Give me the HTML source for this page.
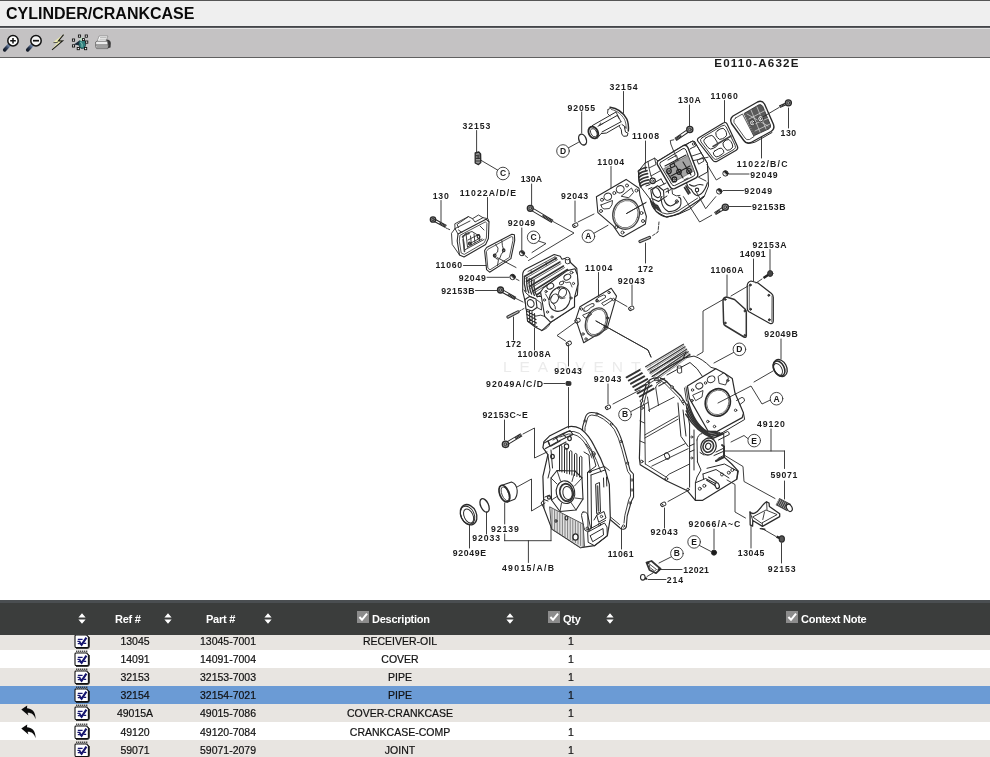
<!DOCTYPE html>
<html><head><meta charset="utf-8"><title>CYLINDER/CRANKCASE</title>
<style>
html,body{margin:0;padding:0;background:#fff;}
body{width:990px;height:757px;overflow:hidden;position:relative;font-family:"Liberation Sans",Arial,sans-serif;color:#111;}
#title{position:absolute;left:0;top:0;width:990px;height:26px;background:#efefef;border-top:1px solid #555;box-sizing:border-box;}
#title span{position:absolute;left:6px;top:4px;font-size:16px;font-weight:bold;color:#0a0a0a;letter-spacing:0px;white-space:nowrap;}
#tline{position:absolute;left:0;top:26px;width:990px;height:2px;background:linear-gradient(#3e4044 0,#4e5054 70%,#9a9a9c 100%);}
#tool{position:absolute;left:0;top:28px;width:990px;height:29px;background:#c4c2c3;border-top:1px solid #e4e4e4;box-sizing:border-box;}
#tline2{position:absolute;left:0;top:57px;width:990px;height:1px;background:#606060;}
#diag{position:absolute;left:0;top:57px;width:990px;height:543px;}
#thead{position:absolute;left:0;top:600px;width:990px;height:34.5px;background:#3b3d3c;border-top:3px solid #4a4e51;box-sizing:border-box;color:#fff;font-weight:bold;font-size:11px;}
#thead span{position:absolute;top:10px;white-space:nowrap;letter-spacing:-0.25px;}
#thead svg{position:absolute;}
.row{position:absolute;left:0;width:990px;height:18.3px;font-size:10.5px;color:#111;}
.row span{-webkit-text-stroke:0.2px #111;position:absolute;top:3.5px;text-align:center;white-space:nowrap;transform:translateX(-50%);}
.ni{position:absolute;left:74px;top:0.5px;}
.bk{position:absolute;left:21px;top:1.5px;}
#diag{fill:none;stroke:#2a2a2a;stroke-width:0.9;stroke-linecap:round;stroke-linejoin:round;}
#diag text{stroke:none;fill:#1c1c1c;font-family:"Liberation Sans",sans-serif;font-weight:bold;}
#diag text.cl{font-family:"Liberation Sans",sans-serif;font-size:8.5px;text-anchor:middle;}
#title,#thead,#rows,#diag,#tool{will-change:transform;}
.odd{background:#e8e5e1;}
.sel{background:#6b9bd5;}
</style></head><body>
<svg width="0" height="0" style="position:absolute"><defs>
<symbol id="note" viewBox="0 0 16 17">
<path d="M1.9 3 H12.6 L14.4 4.8 V14.2 Q14.4 15.6 13 15.6 H2.4 Q1 15.6 1 14.2 V3.9 Q1 3 1.9 3 Z" fill="#fff" stroke="#111" stroke-width="1.1"/>
<path d="M2 16.2 H13.4 Q15.2 16.2 15.2 14.4 V5" fill="none" stroke="#111" stroke-width="1.1"/>
<path d="M2.2 1.7 H13.4" stroke="#222" stroke-width="2.2" stroke-dasharray="1.1 0.9"/>
<path d="M2.2 2.6 H13.4" stroke="#fff" stroke-width="0.7" stroke-dasharray="0.5 1.5" stroke-dashoffset="-0.3"/>
<path d="M5.4 10.2 L7.6 12.8 L12.4 5.6" fill="none" stroke="#15156e" stroke-width="2.1"/>
<path d="M3.8 7.4 H8.6 M3.4 9.4 H6.4 M3.8 11.6 H5.6 M9.6 11.4 H12.2" stroke="#15156e" stroke-width="1.1"/>
</symbol>
<symbol id="back" viewBox="0 0 16 15">
<path d="M0.3 4.6 L6.2 0.4 L6 3.2 C10.5 3.4 14.8 6.2 14.6 14.2 C13.2 9.6 10.2 7.6 6.6 7.8 L7.4 10.4 Z" fill="#0c0c0c"/>
</symbol>
<symbol id="sort" viewBox="0 0 8 11">
<path d="M4 0.3 L7.6 4.6 H0.4 Z M4 10.7 L7.6 6.4 H0.4 Z" fill="#fff"/>
</symbol>
<symbol id="chk" viewBox="0 0 12 12">
<rect width="12" height="12" fill="#8c8c8c"/>
<path d="M2.4 6 L5 8.8 L10 2.6" fill="none" stroke="#fff" stroke-width="2"/>
</symbol>
</defs></svg>
<div id="title"><span>CYLINDER/CRANKCASE</span></div>
<div id="tline"></div>
<div id="tool"><svg width="120" height="29" viewBox="0 28 120 29" style="position:absolute;left:0;top:-1px">
<defs><linearGradient id="hg" x1="1" y1="0" x2="0" y2="1"><stop offset="0" stop-color="#7f95b8"/><stop offset="0.6" stop-color="#2a3850"/><stop offset="1" stop-color="#141c2a"/></linearGradient></defs>
<g>
<path d="M9.2 45 L4.6 50" stroke="url(#hg)" stroke-width="3.4" stroke-linecap="round"/>
<circle cx="13" cy="40.7" r="5.2" fill="#fff" stroke="#111" stroke-width="1.5"/>
<path d="M10.2 40.7 H15.8 M13 37.9 V43.5" stroke="#111" stroke-width="1.5"/>
<path d="M32.2 45 L27.6 50" stroke="url(#hg)" stroke-width="3.4" stroke-linecap="round"/>
<circle cx="36" cy="40.7" r="5.2" fill="#f4f4f4" stroke="#111" stroke-width="1.5"/>
<path d="M33 40.7 H39" stroke="#111" stroke-width="1.7"/>
</g>
<g>
<path d="M63.6 34.6 L53.4 42.6 L57.8 42.4 L52 49.8 L62.6 40.8 L58.4 41 Z" fill="#f1f0b0" stroke="#f1f0b0" stroke-width="0.6"/>
<path d="M63.6 34.6 L58.4 41 L62.6 40.8 L52 49.8" fill="none" stroke="#1a1a1a" stroke-width="1.1"/>
<path d="M53.4 42.6 L57.8 42.4" stroke="#333" stroke-width="0.8"/>
</g>
<g>
<path d="M73.8 44.5 L79.5 40.5 L80 45.5 Z" fill="#1c2a3a"/>
<ellipse cx="82.3" cy="43.8" rx="3.4" ry="4.8" fill="#2f7d7c" stroke="#163c40" stroke-width="0.8"/>
<ellipse cx="82" cy="39.2" rx="2.2" ry="2" fill="#bfe0c8"/>
<path d="M80.5 42 Q83 43.5 82 47" stroke="#8fd0c0" stroke-width="0.9" fill="none"/>
<g fill="#fff" stroke="#111" stroke-width="0.9">
<rect x="78.4" y="35" width="2.2" height="2.2"/><rect x="85.2" y="35" width="2.2" height="2.2"/>
<rect x="72.4" y="39" width="2.2" height="2.2"/><rect x="72.4" y="44.8" width="2.2" height="2.2"/>
<rect x="77.2" y="47.5" width="2.2" height="2.2"/><rect x="84.5" y="47.5" width="2.2" height="2.2"/>
<rect x="85.6" y="41" width="2.2" height="2.2"/><rect x="82.4" y="38.6" width="2" height="2"/>
</g></g>
<g>
<path d="M99.2 36 H107.9 L105.8 41.6 H97 Z" fill="#fff" stroke="#777" stroke-width="0.6"/>
<path d="M100 37.6 H106.6 M99.4 39.2 H106 " stroke="#888" stroke-width="0.6"/>
<path d="M106.5 39.5 Q110.5 39.5 110.8 43 L110.5 47.5 L107 48.5 Z" fill="#3a3a3a"/>
<path d="M95.6 42 L97.2 41.2 H107.5 L108.2 45.5 L107.8 48.6 H96.6 L95.6 46.8 Z" fill="#ececec" stroke="#555" stroke-width="0.7"/>
<path d="M95.8 45 H108 M96.4 47 H107.6" stroke="#444" stroke-width="0.9"/>
</g>
</svg></div>
<div id="tline2"></div>
<svg id="diag" viewBox="0 57 990 543" width="990" height="543">
<!--DIAGRAM-->
<text x="503" y="372" font-size="15.5" textLength="194" lengthAdjust="spacing" style="fill:#ebebeb;font-weight:normal">LEADVENTURE</text>
<g class="lb">
<text x="609.40" y="89.8" font-size="8.7" textLength="28.25" lengthAdjust="spacing">32154</text>
<text x="567.60" y="110.5" font-size="8.7" textLength="27.50" lengthAdjust="spacing">92055</text>
<text x="462.60" y="128.7" font-size="8.7" textLength="27.63" lengthAdjust="spacing">32153</text>
<text x="520.70" y="182.3" font-size="8.7" textLength="21.33" lengthAdjust="spacing">130A</text>
<text x="459.70" y="195.8" font-size="8.7" textLength="56.33" lengthAdjust="spacing">11022A/D/E</text>
<text x="432.70" y="198.7" font-size="8.7" textLength="16.05" lengthAdjust="spacing">130</text>
<text x="631.90" y="139.0" font-size="8.7" textLength="27.12" lengthAdjust="spacing">11008</text>
<text x="678.10" y="103.4" font-size="8.7" textLength="22.67" lengthAdjust="spacing">130A</text>
<text x="710.60" y="98.7" font-size="8.7" textLength="27.25" lengthAdjust="spacing">11060</text>
<text x="780.60" y="135.5" font-size="8.7" textLength="15.45" lengthAdjust="spacing">130</text>
<text x="736.70" y="166.6" font-size="8.7" textLength="50.74" lengthAdjust="spacing">11022/B/C</text>
<text x="750.20" y="177.9" font-size="8.7" textLength="27.50" lengthAdjust="spacing">92049</text>
<text x="744.20" y="193.7" font-size="8.7" textLength="27.88" lengthAdjust="spacing">92049</text>
<text x="752.00" y="209.7" font-size="8.7" textLength="33.60" lengthAdjust="spacing">92153B</text>
<text x="597.20" y="164.8" font-size="8.7" textLength="27.00" lengthAdjust="spacing">11004</text>
<text x="561.10" y="199.4" font-size="8.7" textLength="27.00" lengthAdjust="spacing">92043</text>
<text x="507.70" y="226.0" font-size="8.7" textLength="27.50" lengthAdjust="spacing">92049</text>
<text x="435.50" y="268.4" font-size="8.7" textLength="26.62" lengthAdjust="spacing">11060</text>
<text x="458.70" y="280.5" font-size="8.7" textLength="27.12" lengthAdjust="spacing">92049</text>
<text x="441.20" y="293.7" font-size="8.7" textLength="33.24" lengthAdjust="spacing">92153B</text>
<text x="505.70" y="347.0" font-size="8.7" textLength="15.30" lengthAdjust="spacing">172</text>
<text x="517.60" y="356.9" font-size="8.7" textLength="33.12" lengthAdjust="spacing">11008A</text>
<text x="585.00" y="271.0" font-size="8.7" textLength="27.25" lengthAdjust="spacing">11004</text>
<text x="617.70" y="283.5" font-size="8.7" textLength="27.12" lengthAdjust="spacing">92043</text>
<text x="637.70" y="271.5" font-size="8.7" textLength="15.30" lengthAdjust="spacing">172</text>
<text x="752.50" y="247.7" font-size="8.7" textLength="33.96" lengthAdjust="spacing">92153A</text>
<text x="739.80" y="257.2" font-size="8.7" textLength="25.75" lengthAdjust="spacing">14091</text>
<text x="710.50" y="273.1" font-size="8.7" textLength="33.00" lengthAdjust="spacing">11060A</text>
<text x="764.30" y="336.9" font-size="8.7" textLength="33.48" lengthAdjust="spacing">92049B</text>
<text x="554.20" y="374.4" font-size="8.7" textLength="27.75" lengthAdjust="spacing">92043</text>
<text x="593.70" y="381.9" font-size="8.7" textLength="27.75" lengthAdjust="spacing">92043</text>
<text x="486.10" y="386.7" font-size="8.7" textLength="57.00" lengthAdjust="spacing">92049A/C/D</text>
<text x="482.40" y="417.8" font-size="8.7" textLength="45.37" lengthAdjust="spacing">92153C~E</text>
<text x="757.00" y="427.3" font-size="8.7" textLength="27.88" lengthAdjust="spacing">49120</text>
<text x="770.40" y="477.5" font-size="8.7" textLength="27.00" lengthAdjust="spacing">59071</text>
<text x="490.90" y="532.0" font-size="8.7" textLength="28.00" lengthAdjust="spacing">92139</text>
<text x="472.20" y="541.4" font-size="8.7" textLength="27.88" lengthAdjust="spacing">92033</text>
<text x="452.70" y="555.6" font-size="8.7" textLength="33.24" lengthAdjust="spacing">92049E</text>
<text x="501.90" y="571.0" font-size="8.7" textLength="52.20" lengthAdjust="spacing">49015/A/B</text>
<text x="607.70" y="556.9" font-size="8.7" textLength="25.88" lengthAdjust="spacing">11061</text>
<text x="650.40" y="535.4" font-size="8.7" textLength="27.37" lengthAdjust="spacing">92043</text>
<text x="688.50" y="526.8" font-size="8.7" textLength="51.75" lengthAdjust="spacing">92066/A~C</text>
<text x="737.70" y="556.2" font-size="8.7" textLength="26.63" lengthAdjust="spacing">13045</text>
<text x="767.70" y="571.8" font-size="8.7" textLength="28.00" lengthAdjust="spacing">92153</text>
<text x="683.20" y="572.8" font-size="8.7" textLength="25.75" lengthAdjust="spacing">12021</text>
<text x="666.70" y="582.7" font-size="8.7" textLength="16.50" lengthAdjust="spacing">214</text>
</g>
<text class="big" x="714.2" y="67" font-size="11.6" textLength="84.3" lengthAdjust="spacing">E0110-A632E</text>
<circle cx="563" cy="151" r="6.3" fill="#fff" stroke="#333" stroke-width="0.9"/>
<text class="cl" x="563" y="153.9">D</text>
<circle cx="503" cy="173.5" r="6.3" fill="#fff" stroke="#333" stroke-width="0.9"/>
<text class="cl" x="503" y="176.4">C</text>
<circle cx="533.6" cy="237.3" r="6.3" fill="#fff" stroke="#333" stroke-width="0.9"/>
<text class="cl" x="533.6" y="240.2">C</text>
<circle cx="588.4" cy="236.3" r="6.3" fill="#fff" stroke="#333" stroke-width="0.9"/>
<text class="cl" x="588.4" y="239.2">A</text>
<circle cx="739.4" cy="349.3" r="6.3" fill="#fff" stroke="#333" stroke-width="0.9"/>
<text class="cl" x="739.4" y="352.2">D</text>
<circle cx="776.5" cy="398.7" r="6.3" fill="#fff" stroke="#333" stroke-width="0.9"/>
<text class="cl" x="776.5" y="401.6">A</text>
<circle cx="625" cy="414.5" r="6.3" fill="#fff" stroke="#333" stroke-width="0.9"/>
<text class="cl" x="625" y="417.4">B</text>
<circle cx="754.2" cy="440.6" r="6.3" fill="#fff" stroke="#333" stroke-width="0.9"/>
<text class="cl" x="754.2" y="443.5">E</text>
<circle cx="694.1" cy="541.9" r="6.3" fill="#fff" stroke="#333" stroke-width="0.9"/>
<text class="cl" x="694.1" y="544.8">E</text>
<circle cx="676.9" cy="553.5" r="6.3" fill="#fff" stroke="#333" stroke-width="0.9"/>
<text class="cl" x="676.9" y="556.4">B</text>
<ellipse cx="582.6" cy="139.6" rx="3.6" ry="5.6" transform="rotate(-22 582.6 139.6)" stroke-width="1.4"/>
<g>
<ellipse cx="593.3" cy="132.5" rx="4.6" ry="6.1" transform="rotate(-25 593.3 132.5)" stroke-width="1.9" fill="#fff"/>
<ellipse cx="593.8" cy="132.7" rx="2.9" ry="4.4" transform="rotate(-25 593.8 132.7)" stroke-width="0.8"/>
<path d="M592.3 125.6 L616 112 M598 126.2 L617.3 115.4 M602 132 L621 121.8 M597 138.6 L601 133.6 L606.5 133 L620 125.2" stroke-width="1"/>
<path d="M600.5 123 L599.5 125.5 L603 123.5" stroke-width="0.8"/>
<path d="M610 107.2 Q621 108.5 626.8 119 Q629 124 628.3 131" stroke-width="1.5"/>
<path d="M611.5 109.5 Q620 111.5 624.5 119.5 Q626.5 124 626 129" stroke-width="0.8" stroke-dasharray="2 1"/>
<path d="M608 109.5 L607.5 113.5 L610 116 M608 109.5 L611 108 M616 112 L621 121.8 M617.3 115.4 L619 118.5" stroke-width="0.9"/>
<path d="M619.5 126.5 Q622 129 621.8 134 L623.5 136.3 L627.2 136 L628 133.2 L625.5 132 L624.5 127.5 M622 124.5 L626 127.5" stroke-width="1"/>
</g>
<path d="M475.2 153 L478.8 152 L480.6 154 L480.8 162.5 L478.5 164.6 L475.2 163 Z" stroke-width="1.3" fill="#999"/>
<path d="M476 155.5 L480 155 M476 158.5 L480.5 158.5 M476 161 L480.5 161" stroke-width="0.9"/>
<ellipse cx="478" cy="157" rx="1" ry="1.3" stroke-width="0.7"/>
<path d="M434.9 220.5 L446.0 226.5" stroke="#222" stroke-width="3.2" stroke-linecap="butt"/>
<path d="M434.9 220.5 L439.5 223.0" stroke="#fff" stroke-width="1.3" stroke-linecap="butt"/>
<path d="M439.5 223.0 L446.0 226.5" stroke="#8a8a8a" stroke-width="1.8" stroke-dasharray="0.7 0.9" stroke-linecap="butt"/>
<circle cx="433" cy="219.5" r="2.7" fill="#9a9a9a" stroke-width="1.3"/>
<circle cx="433" cy="219.5" r="1.2" stroke-width="0.8"/>
<g>
<path d="M458 234 L486 219.2 L489 221.8 L488.4 238.5 L485.6 244.5 L464 257 L459.5 255 L457.2 241 Z" stroke-width="1.1" fill="#fff"/>
<path d="M460.2 235.2 L485.5 221.8 L486.9 223.5 L486.4 238 L484.2 242.8 L464.3 254.4 L461.2 253 L459.4 241.5 Z" stroke-width="0.8"/>
<path d="M458 234 L455 228.6 L451.5 233.3 L452.2 244.4 L459.5 255 M455 228.6 L454.8 223.8 L468.4 216.6 L472.5 218.7 L478.5 215 L483 217.7 L488 218.7 L489 221.8 M472.5 218.7 L475 222 L483 217.7 M468.4 216.6 L457 224.5 L458.5 227.5 M455 228.6 L470 221" stroke-width="0.9"/>
<path d="M463 236 L466 233.5 L472 231.5 L480 236.5 L479.5 240.5 M466 233.5 L467.5 247 M463 236 L464.5 250 M468 240 L478.5 234.5 M469 244 L479.5 238.5 M470.5 236 L471.5 245 M474 234 L475 243 M464.5 250 L484 239.5 M467.5 247 L482 239 M480 226 L484 230 M462 232.5 L458.5 230" stroke-width="0.9"/>
<path d="M462.5 237 Q465 234 469 233.5 M463.2 239.5 L464.5 251.5" stroke-width="1.6" stroke="#444"/>
<ellipse cx="478.5" cy="236.5" rx="1.3" ry="1.8" stroke-width="1.2"/>
<ellipse cx="469.5" cy="243.5" rx="1" ry="1.4" stroke-width="1.1"/>
</g>
<g>
<path d="M484.6 250.5 L486.6 247.5 L511.9 234.3 L514.4 234.8 L514.7 240.4 L510.9 258.6 L489.6 272.2 L486.6 269.7 Z" stroke-width="1.1" fill="#fff"/>
<path d="M486.6 251.3 L488 249.2 L511.4 236.6 L512.8 237 L512.9 240.6 L509.4 257.4 L490 269.8 L488.2 268.4 Z" stroke-width="0.8"/>
<path d="M495.7 244.6 Q499.5 248 497.6 252 Q495 253.5 494.2 256.2 Q495.5 259 498.5 259.5 L497.5 265.5 M501.8 240.5 Q502 246 503.8 250.5 Q501 254 499.5 258.8" stroke-width="0.9"/>
<ellipse cx="494.7" cy="255.6" rx="1.3" ry="1.5" stroke-width="1.2"/>
<ellipse cx="503.7" cy="250.3" rx="1.2" ry="1.5" stroke-width="1.2"/>
</g>
<path d="M497 257.5 L516 267.5"/>
<circle cx="522" cy="253.2" r="2.6" fill="#fff" stroke-width="1"/>
<path d="M520.2 251.4 A2.6 2.6 0 0 1 523.8 255.0 Z" stroke-width="0.5" fill="#222"/>
<circle cx="512.6" cy="277" r="2.7" fill="#fff" stroke-width="1"/>
<path d="M510.7 275.1 A2.7 2.7 0 0 1 514.5 278.9 Z" stroke-width="0.5" fill="#222"/>
<path d="M516 279 L519 280.5"/>
<path d="M525 255.5 L527.5 257.5"/>
<path d="M532.4 209.5 L552.5 221.5" stroke="#222" stroke-width="3.6" stroke-linecap="butt"/>
<path d="M532.4 209.5 L542.5 215.6" stroke="#fff" stroke-width="1.7" stroke-linecap="butt"/>
<path d="M542.5 215.6 L552.5 221.5" stroke="#8a8a8a" stroke-width="2.2" stroke-dasharray="0.7 0.9" stroke-linecap="butt"/>
<circle cx="530.3" cy="208.3" r="3" fill="#9a9a9a" stroke-width="1.3"/>
<circle cx="530.3" cy="208.3" r="1.4" stroke-width="0.8"/>
<path d="M502.6 291.2 L515.5 298.5" stroke="#222" stroke-width="3.4" stroke-linecap="butt"/>
<path d="M502.6 291.2 L508.0 294.2" stroke="#fff" stroke-width="1.5" stroke-linecap="butt"/>
<path d="M508.0 294.2 L515.5 298.5" stroke="#8a8a8a" stroke-width="2.0" stroke-dasharray="0.7 0.9" stroke-linecap="butt"/>
<circle cx="500.5" cy="290" r="3" fill="#9a9a9a" stroke-width="1.3"/>
<circle cx="500.5" cy="290" r="1.4" stroke-width="0.8"/>
<path d="M508 317 L518 311.8" stroke="#333" stroke-width="3.2" stroke-linecap="round"/><path d="M508 317 L518 311.8" stroke="#bbb" stroke-width="1.2" stroke-dasharray="0.8 0.8"/>
<path d="M519.5 311 L524 308.5" stroke-dasharray="2 1.2"/>
<g>
<path d="M522.7 291.4 L522.7 274 Q523 270.5 526 269 L554.2 254.5 L560.2 256.3 L562 259.3 L565.5 258.2 L569.5 258.6 L570.5 262.5 L576.8 268.5 L578 284.2 L577.4 295 L574.5 297.3 L574.5 306.8 L550.7 322.3 L541.8 330.6 L535.2 327 L527.5 321 L526.3 309.2 L525 300.9 Z" stroke-width="1.1" fill="#fff"/>
<path d="M524.5 276.5 L556.5 258" stroke-width="1.5" stroke="#333"/>
<path d="M525.7 278.3 L557.5 259.6" stroke-width="0.7"/>
<path d="M526.5 281.5 L560 262" stroke-width="1.5" stroke="#333"/>
<path d="M527.7 283.3 L561 263.6" stroke-width="0.7"/>
<path d="M529.5 286.5 L563.5 266" stroke-width="1.5" stroke="#333"/>
<path d="M530.7 288.3 L564.5 267.6" stroke-width="0.7"/>
<path d="M533 291 L567.5 269.5" stroke-width="1.5" stroke="#333"/>
<path d="M534.2 292.8 L568.5 271.1" stroke-width="0.7"/>
<path d="M536.5 295 L571 272.5" stroke-width="1.5" stroke="#333"/>
<path d="M537.7 296.8 L572 274.1" stroke-width="0.7"/>
<path d="M524.5 276.5 Q523.5 284.0 526.0 291.5" stroke-width="1.3" stroke="#333"/>
<path d="M526.9 277.4 Q525.9 285.3 528.8 292.8" stroke-width="1.3" stroke="#333"/>
<path d="M529.3 278.3 Q528.3 286.6 531.6 294.1" stroke-width="1.3" stroke="#333"/>
<path d="M531.7 279.2 Q530.7 287.9 534.4 295.4" stroke-width="1.3" stroke="#333"/>
<path d="M534.1 280.1 Q533.1 289.2 537.2 296.7" stroke-width="1.3" stroke="#333"/>
<path d="M524 290 Q527 296 534 298 M537 296.5 L540.6 296.5" stroke-width="1"/>
<path d="M528 271.5 L555 256.8 M531 270.5 L531.5 273 M546 262.5 L546.5 265 M555 257 L556 260" stroke-width="0.8"/>
<path d="M565.3 258.5 L565.5 263 Q567.5 264.5 569.8 263.2 L569.6 258.8" stroke-width="0.9"/>
<ellipse cx="567.5" cy="258.6" rx="2.2" ry="1.2" stroke-width="0.9" fill="#fff"/>
<path d="M540.6 292 L543.5 287.8 L567.3 270.6 L575 268.8 L577.5 275 L578 284.2 L574.5 297.3 L574.5 306.8 L550.7 322.3 L544.7 316.3 Z" stroke-width="1.1" fill="#fff"/>
<ellipse cx="559.6" cy="299.1" rx="10.3" ry="12.6" transform="rotate(25 559.6 299.1)" stroke-width="1.1"/>
<ellipse cx="554.6" cy="298.6" rx="3.6" ry="4.8" transform="rotate(25 554.6 298.6)" stroke-width="1"/>
<ellipse cx="562.6" cy="292.8" rx="3.8" ry="4.6" transform="rotate(25 562.6 292.8)" stroke-width="1"/>
<path d="M553 303.5 Q556 306 555.5 309 M558 297 Q561 300 565 298" stroke-width="0.9"/>
<ellipse cx="567.3" cy="277.1" rx="3.6" ry="2.7" transform="rotate(-30 567.3 277.1)" stroke-width="1"/>
<ellipse cx="550.3" cy="286.2" rx="3.6" ry="2.7" transform="rotate(-30 550.3 286.2)" stroke-width="1"/>
<ellipse cx="561.5" cy="283" rx="2.2" ry="1.6" transform="rotate(-30 561.5 283)" stroke-width="0.9"/>
<ellipse cx="571.5" cy="272.5" rx="1.5" ry="1.2" stroke-width="0.9"/>
<ellipse cx="546" cy="291.5" rx="1.1" ry="1.1" stroke-width="0.9"/>
<ellipse cx="573.5" cy="283.5" rx="1.1" ry="1.1" stroke-width="0.9"/>
<ellipse cx="571" cy="298" rx="1.1" ry="1.1" stroke-width="0.9"/>
<ellipse cx="547.5" cy="312" rx="1.1" ry="1.1" stroke-width="0.9"/>
<ellipse cx="552" cy="317" rx="1.1" ry="1.1" stroke-width="0.9"/>
<ellipse cx="544.5" cy="300" rx="1.1" ry="1.1" stroke-width="0.9"/>
<ellipse cx="558.5" cy="288" rx="1.1" ry="1.1" stroke-width="0.9"/>
<path d="M545.5 294 L549 300 L552 296 M563 281 Q566 284 570 282 L572 287" stroke-width="0.8"/>
<path d="M525 299.5 L529.5 296.5 L536 299 L537 307.5 L532 311 L526 309 Z" stroke-width="1.1" fill="#fff"/>
<ellipse cx="530.7" cy="303.5" rx="3.3" ry="3.9" transform="rotate(-20 530.7 303.5)" stroke-width="1.1"/>
<path d="M537 300 L541 303 L541.5 310 L537 307.5" stroke-width="0.9"/>
<path d="M527 311 L535.5 316 M527 314.5 L536 319.5 M527.3 318 L536.5 323 M528 321.5 L537 326.5 M529.5 310.5 L529.8 322.5 M532 312 L532.3 324 M534.5 313.5 L535 326" stroke-width="1.1"/>
<path d="M536 316 Q541 314 544.7 316.3 M541.8 330.6 Q548 329 550.7 322.3" stroke-width="0.9"/>
</g>
<g>
<path d="M575.8 319.4 L580 306.7 L611.2 288.2 L616.5 296.1 L615 301.4 L607 328.9 L583.7 342.7 Z" stroke-width="1.1" fill="#fff"/>
<ellipse cx="596.4" cy="322" rx="10.4" ry="14.6" transform="rotate(22 596.4 322)" stroke-width="1.4" stroke="#444"/>
<ellipse cx="596.4" cy="322" rx="9" ry="13.2" transform="rotate(22 596.4 322)" stroke-width="0.6"/>
<path d="M584 311 Q583 307.5 587 306 L592 303.5 Q595 303 594 306 Q590 307 588.5 310 Q586 312.5 584 311 Z M596 301.5 Q595.5 298.5 599 297 L603.5 295 Q606.5 295 605.5 297.5 L599 301.5 Z M583 315 L590 312 L591.5 314.5 L585.5 318 Z M602 303 L611 298 L612.5 300 L604 305.5 Z" stroke-width="0.9"/>
<ellipse cx="581.5" cy="309" rx="1.2" ry="1.2" stroke-width="0.9"/>
<ellipse cx="609" cy="292.5" rx="1.2" ry="1.2" stroke-width="0.9"/>
<ellipse cx="613.5" cy="299.5" rx="1.2" ry="1.2" stroke-width="0.9"/>
<ellipse cx="607.5" cy="318" rx="1.2" ry="1.2" stroke-width="0.9"/>
<ellipse cx="605.5" cy="327" rx="1.2" ry="1.2" stroke-width="0.9"/>
<ellipse cx="583" cy="334" rx="1.2" ry="1.2" stroke-width="0.9"/>
<ellipse cx="586" cy="339" rx="1.2" ry="1.2" stroke-width="0.9"/>
<ellipse cx="597" cy="300.5" rx="1.2" ry="1.2" stroke-width="0.9"/>
</g>
<g transform="rotate(-28 631.3 308.3)"><rect x="628.6999999999999" y="306.5" width="5.2" height="3.6" rx="1.4" fill="#fff" stroke-width="0.9"/><ellipse cx="629.6999999999999" cy="308.3" rx="1" ry="1.7" stroke-width="0.7"/></g>
<g transform="rotate(-28 577.6 320.6)"><rect x="575.0" y="318.8" width="5.2" height="3.6" rx="1.4" fill="#fff" stroke-width="0.9"/><ellipse cx="576.0" cy="320.6" rx="1" ry="1.7" stroke-width="0.7"/></g>
<path d="M596 321 L648 350 L651 357"/>
<path d="M616.5 300.5 L627 306.5"/>
<path d="M575 322.5 L557 335.5 L565.5 341"/>
<g transform="rotate(-28 568.8 343.4)"><rect x="566.1999999999999" y="341.59999999999997" width="5.2" height="3.6" rx="1.4" fill="#fff" stroke-width="0.9"/><ellipse cx="567.1999999999999" cy="343.4" rx="1" ry="1.7" stroke-width="0.7"/></g>
<g>
<path d="M596.4 196.7 L626.1 179.4 L639 188.3 L640 195.7 L646.4 216.5 L645.4 224 L623.2 236.8 L619.7 235.3 L613.3 225.9 L597.9 212.6 Z" stroke-width="1.1" fill="#fff"/>
<ellipse cx="626.1" cy="214.2" rx="13.2" ry="15.2" transform="rotate(15 626.1 214.2)" stroke-width="1.4" stroke="#444"/>
<ellipse cx="626.1" cy="214.2" rx="11.8" ry="13.8" transform="rotate(15 626.1 214.2)" stroke-width="0.6"/>
<ellipse cx="607.8" cy="196.7" rx="3.9" ry="3.5" transform="rotate(-25 607.8 196.7)" stroke-width="1"/>
<ellipse cx="620.2" cy="189.3" rx="4" ry="3.6" transform="rotate(-25 620.2 189.3)" stroke-width="1"/>
<path d="M601 205 L612.5 200.5 Q613 205 609.5 208.5 L604 209 Q601 208 601 205 Z M621.5 196 L631.5 188 L633.5 192.5 L629 197.5 Z" stroke-width="0.9"/>
<ellipse cx="602" cy="199.8" rx="1.5" ry="1.5" stroke-width="0.9"/>
<ellipse cx="601" cy="211" rx="1.5" ry="1.5" stroke-width="0.9"/>
<ellipse cx="614.3" cy="193" rx="1.5" ry="1.5" stroke-width="0.9"/>
<ellipse cx="627" cy="185.5" rx="1.5" ry="1.5" stroke-width="0.9"/>
<ellipse cx="636.5" cy="190.5" rx="1.5" ry="1.5" stroke-width="0.9"/>
<ellipse cx="641.5" cy="213" rx="1.5" ry="1.5" stroke-width="0.9"/>
<ellipse cx="643" cy="221" rx="1.5" ry="1.5" stroke-width="0.9"/>
<ellipse cx="616.5" cy="227" rx="1.5" ry="1.5" stroke-width="0.9"/>
<ellipse cx="622.5" cy="232.5" rx="1.5" ry="1.5" stroke-width="0.9"/>
</g>
<path d="M626.5 213.5 L646 202.5"/>
<g transform="rotate(-28 575.3 225.2)"><rect x="572.6999999999999" y="223.39999999999998" width="5.2" height="3.6" rx="1.4" fill="#fff" stroke-width="0.9"/><ellipse cx="573.6999999999999" cy="225.2" rx="1" ry="1.7" stroke-width="0.7"/></g>
<path d="M640 241.5 L649.5 237.5" stroke="#333" stroke-width="3.2" stroke-linecap="round"/><path d="M640 241.5 L649.5 237.5" stroke="#bbb" stroke-width="1.2" stroke-dasharray="0.8 0.8"/>
<g>
<path d="M638.5 171 L645 163 L654.6 158.2 L658 161 L683.5 145.5 L692.8 141 L696.2 144.5 L707.5 163.5 L708 172 L708.5 186 L704 197 L690 209 L679 214 L666.7 217.3 L656 211.5 L650 199 L640 186 Z" stroke-width="1" fill="#fff"/>
<path d="M686 145 L689.7 142.4 L692.8 141 Q695.5 140.8 696.2 144.5 Q696 147 692.8 147.4 L690 149 M696.2 144.5 L707.4 163.3 L707.6 172 L698.5 177" stroke-width="1"/>
<ellipse cx="693.5" cy="144" rx="1.2" ry="1.2" stroke-width="0.9"/>
<path d="M697.4 160.3 L702.5 157.5 L704 161 L699 164 Z" stroke-width="0.9"/>
<path d="M679 160.3 L701.2 153 M682 163.3 L708.1 157.2" stroke-width="0.9"/>
<path d="M658 161 L683.5 145.5 Q686.5 144.3 688 147.8 L697.6 173 Q698.6 176.6 695.6 178.2 L674.6 188.6 Q671.6 189.6 670 186.6 L657.4 164.6 Q656.6 162 658 161 Z" stroke-width="1.4" fill="#fff"/>
<path d="M660.3 162.5 L683 148.6 Q685 148 686 150.2 L694.8 173 Q695.4 175.2 693.6 176.2 L674.6 185.6 Q672.8 186 671.8 184.4 L660 164.8 Q659.6 163.2 660.3 162.5 Z" stroke-width="1"/>
<path d="M664 168.5 L688 155.5 L694 171 L673 182.5 Z" stroke-width="0.6" fill="#a4a4a4" stroke="#555"/>
<ellipse cx="669" cy="171" rx="2.2" ry="2.4" stroke-width="1.4" fill="#fff" stroke="#222"/>
<ellipse cx="669" cy="171" rx="0.8" ry="0.9" stroke-width="0.9"/>
<ellipse cx="679" cy="171.8" rx="2.2" ry="2.4" stroke-width="1.4" fill="#fff" stroke="#222"/>
<ellipse cx="679" cy="171.8" rx="0.8" ry="0.9" stroke-width="0.9"/>
<ellipse cx="674.4" cy="179.4" rx="2.2" ry="2.4" stroke-width="1.4" fill="#fff" stroke="#222"/>
<ellipse cx="674.4" cy="179.4" rx="0.8" ry="0.9" stroke-width="0.9"/>
<ellipse cx="689" cy="171" rx="2.2" ry="2.4" stroke-width="1.4" fill="#fff" stroke="#222"/>
<ellipse cx="689" cy="171" rx="0.8" ry="0.9" stroke-width="0.9"/>
<path d="M665 166 L686 155 M667 172 L672 180 M676 166 L683 178 M683 162 L691 175 M671 176 L690 166 M670 165 L674 163 L675 166 L671 168 Z" stroke-width="1.1" stroke="#222"/>
<path d="M672.5 157.5 L676.5 155.2 L677.5 158.5 L676 159.5 M668 160 L672.5 157.5 M672.8 163.2 L679 159.8" stroke-width="0.9"/>
<path d="M673.8 139.8 L670.3 140.5 L670.8 144 L676 157" stroke-width="0.9"/>
<path d="M638.5 171.0 Q641.0 168.5 646.5 167.5" stroke-width="1.7" stroke="#333"/>
<path d="M638.9 174.1 Q641.4 171.6 647.0 170.6" stroke-width="1.7" stroke="#333"/>
<path d="M639.3 177.2 Q641.8 174.7 647.5 173.7" stroke-width="1.7" stroke="#333"/>
<path d="M639.7 180.3 Q642.2 177.8 648.0 176.8" stroke-width="1.7" stroke="#333"/>
<path d="M640.1 183.4 Q642.6 180.9 648.5 179.9" stroke-width="1.7" stroke="#333"/>
<path d="M640.5 186.5 Q643.0 184.0 649.0 183.0" stroke-width="1.7" stroke="#333"/>
<path d="M645 163 L645.5 170 M648 161.5 L649 168 L656 164.5 L654.6 158.2 M649 168 L651 176 L660 171 M651 176 L652 178" stroke-width="0.9"/>
<path d="M639 172 Q637.5 180 641 187" stroke-width="1.2"/>
<ellipse cx="652.6" cy="180.8" rx="2.7" ry="2.7" stroke-width="1.3" fill="#fff"/>
<ellipse cx="652.6" cy="180.8" rx="1" ry="1" stroke-width="0.8"/>
<path d="M646 186 L650 184.5 M655.5 182 L661 179 M648.5 189 L652 187.5 M661 179 L664 184 M658 187 L666 183" stroke-width="1"/>
<path d="M650.8 190 L657.5 185.8 L663.5 190.5 L664 198 L658.5 201.5 L652 198.5 Z" stroke-width="1.1" fill="#fff"/>
<ellipse cx="656.6" cy="192.6" rx="3.5" ry="5.3" transform="rotate(-28 656.6 192.6)" stroke-width="1.2"/>
<path d="M664 190 L668 188 L668.5 193 M666 192 L671 189.5 M664 198 L667 196" stroke-width="1"/>
<path d="M650.2 198.8 Q651 206 656 211.1 Q661 216.5 666.7 216.8 Q673 216.5 679 213.4 L698.9 200.3 L703.5 196.5" stroke-width="1.2"/>
<path d="M652.5 199.5 Q653.5 205.5 657.8 209.6 Q662 213.8 667 214 Q673 213.6 678 211 L697.5 198.2" stroke-width="0.9"/>
<path d="M651.0 201.0 L654.5 208.0" stroke-width="1.3" stroke="#333"/>
<path d="M652.6 202.1 L656.1 208.9" stroke-width="1.3" stroke="#333"/>
<path d="M654.2 203.2 L657.7 209.8" stroke-width="1.3" stroke="#333"/>
<path d="M655.8 204.3 L659.3 210.7" stroke-width="1.3" stroke="#333"/>
<path d="M657.4 205.4 L660.9 211.6" stroke-width="1.3" stroke="#333"/>
<path d="M661.3 200.3 Q662 208 668.2 211.6 Q675 212 679.7 207.2 Q681.5 204 680.9 200.3 M664 199.5 Q666 205.5 670.5 206 Q675 205 677 201 M661.3 200.3 Q660 198 662 196.5 M680.9 200.3 Q681 197.5 678.5 197" stroke-width="1.1"/>
<ellipse cx="676.8" cy="201.5" rx="1.5" ry="1.7" stroke-width="1"/>
<path d="M686.7 183.4 Q687.5 187.5 691.3 189.6 Q694 195 697.4 195.7 Q702 194.5 705 188.8 Q706.8 185.5 707.4 182.7 M689.5 184.5 Q692 186.5 695 186 Q699 183.5 703 185" stroke-width="1.1"/>
<ellipse cx="697" cy="190" rx="1.7" ry="1.9" stroke-width="1.1"/>
<path d="M686 186 L690 193 M684.5 187.5 L688.5 194" stroke-width="1.6" stroke="#333"/>
<path d="M672 189.5 L672.5 194 Q676 197 680 195.5 M684 180 L688 178 M699 177.5 L706 181" stroke-width="0.9"/>
</g>
<g>
<path d="M699.2 137.4 L722.9 123.2 Q725.8 121.4 727.1 124.1 L737.3 146.1 Q738.6 148.8 736.2 150.2 L717.2 161.2 Q714.8 162.6 712.9 160.3 L698.1 141.5 Q696.3 139.2 699.2 137.4 Z" stroke-width="1.2" fill="#fff"/>
<path d="M702.1 137.8 L721.9 125.9 Q724.8 124.1 726.1 126.8 L735.1 145.3 Q736.4 148.0 734.0 149.4 L717.6 158.9 Q715.1 160.4 713.3 158.0 L701.0 141.9 Q699.2 139.6 702.1 137.8 Z" stroke-width="0.9"/>
<path d="M705.9 137.9 L708.8 136.2 Q712.2 134.1 714.1 137.2 L717.1 142.0 Q719.0 145.0 715.9 146.9 L713.2 148.4 Q710.1 150.3 707.9 147.4 L704.6 142.9 Q702.4 140.0 705.9 137.9 Z" stroke-width="1"/>
<path d="M717.8 130.4 L720.1 129.0 Q723.6 126.9 725.2 130.2 L726.3 132.3 Q727.9 135.5 724.7 137.5 L722.5 138.7 Q719.3 140.7 717.4 137.6 L716.2 135.6 Q714.4 132.5 717.8 130.4 Z" stroke-width="1"/>
<path d="M714.7 151.0 L718.8 148.6 Q721.4 147.1 722.9 149.6 L723.3 150.1 Q724.8 152.7 722.4 154.1 L718.5 156.4 Q716.0 157.8 714.2 155.4 L713.9 154.9 Q712.1 152.5 714.7 151.0 Z" stroke-width="1"/>
<path d="M724.8 140.9 L726.1 140.1 Q729.3 138.2 730.9 141.5 L732.3 144.1 Q733.9 147.4 730.9 149.1 L729.7 149.8 Q726.8 151.5 725.0 148.4 L723.4 145.9 Q721.6 142.8 724.8 140.9 Z" stroke-width="1"/>
<path d="M713 146.5 L731 136" stroke-width="1.5" stroke="#444"/>
</g>
<g>
<path d="M733 116 L757.5 102 Q762 100 764.5 104 L773.5 124.5 Q775 129 771 131.5 L751 142.5 Q746.5 144.5 743.8 140.5 L731.5 123.5 Q729.3 119 733 116 Z" stroke-width="1.4" fill="#fff"/>
<path d="M735.5 118 L742.5 114 L754 136.5 L749.5 139.5 Q746.5 140.5 745 138 L734 122.5 Q733 119.5 735.5 118 Z" stroke-width="0.8"/>
<path d="M744.4 113.3 L758.9 104.8 Q761.5 104 762.8 106.5 L770.5 125 Q771.2 127.6 769 128.8 L754.6 135.4 Z" stroke-width="0.8" fill="#5a5a5a"/>
<path d="M747 114 L768 126 M749 119 L766 110 M752 125 L769 118 M755 131 L770 124 M751 110 L760 132 M757 107 L766 129" stroke-width="0.7" stroke="#ddd"/>
<ellipse cx="752.3" cy="122.8" rx="2.7" ry="2.9" stroke-width="0.9" fill="#f4f4f4"/>
<ellipse cx="760.7" cy="118.7" rx="2.9" ry="3.1" stroke-width="0.9" fill="#f4f4f4"/>
<ellipse cx="752.3" cy="122.8" rx="1.1" ry="1.2" stroke-width="0.7"/>
<ellipse cx="760.7" cy="118.7" rx="1.2" ry="1.3" stroke-width="0.7"/>
<path d="M746 142.5 Q752 144.5 758 140.5 L772 132.5" stroke-width="1"/>
</g>
<path d="M779 107.5 L762.5 117.2"/>
<path d="M786.2 103.8 L779.5 106.8" stroke="#222" stroke-width="2.8" stroke-linecap="butt"/>
<path d="M786.2 103.8 L784.8 104.4" stroke="#fff" stroke-width="0.9" stroke-linecap="butt"/>
<path d="M784.8 104.4 L779.5 106.8" stroke="#8a8a8a" stroke-width="1.4" stroke-dasharray="0.7 0.9" stroke-linecap="butt"/>
<circle cx="788.4" cy="102.8" r="3" fill="#9a9a9a" stroke-width="1.3"/>
<circle cx="788.4" cy="102.8" r="1.4" stroke-width="0.8"/>
<path d="M687.8 130.9 L675.5 139.5" stroke="#222" stroke-width="3.6" stroke-linecap="butt"/>
<path d="M687.8 130.9 L681.2 135.5" stroke="#fff" stroke-width="1.7" stroke-linecap="butt"/>
<path d="M681.2 135.5 L675.5 139.5" stroke="#8a8a8a" stroke-width="2.2" stroke-dasharray="0.7 0.9" stroke-linecap="butt"/>
<circle cx="689.8" cy="129.5" r="3.1" fill="#9a9a9a" stroke-width="1.3"/>
<circle cx="689.8" cy="129.5" r="1.4" stroke-width="0.8"/>
<circle cx="725.5" cy="173.4" r="2.7" fill="#fff" stroke-width="1"/>
<path d="M723.6 171.5 A2.7 2.7 0 0 1 727.4 175.3 Z" stroke-width="0.5" fill="#222"/>
<circle cx="719.2" cy="191.4" r="2.7" fill="#fff" stroke-width="1"/>
<path d="M717.3 189.5 A2.7 2.7 0 0 1 721.1 193.3 Z" stroke-width="0.5" fill="#222"/>
<path d="M723.2 208.5 L715.0 213.6" stroke="#222" stroke-width="3.4" stroke-linecap="butt"/>
<path d="M723.2 208.5 L720.1 210.4" stroke="#fff" stroke-width="1.5" stroke-linecap="butt"/>
<path d="M720.1 210.4 L715.0 213.6" stroke="#8a8a8a" stroke-width="2.0" stroke-dasharray="0.7 0.9" stroke-linecap="butt"/>
<circle cx="725.3" cy="207.2" r="3.1" fill="#9a9a9a" stroke-width="1.3"/>
<circle cx="725.3" cy="207.2" r="1.4" stroke-width="0.8"/>
<g>
<path d="M747.2 285.5 Q747.5 282 751 281 L758 283 L771.5 293.5 Q773.3 295 773.3 297.5 L773.3 321 Q773 324.5 770 323.5 L749 311.8 Q747.3 310.5 747.3 308.5 Z" stroke-width="1.2" fill="#fff"/>
<path d="M749.3 286 L749.3 309 M772 296 L771.8 322" stroke-width="0.7"/>
<ellipse cx="750.3" cy="285" rx="0.9" ry="1" stroke-width="1" fill="#555"/>
<ellipse cx="768.8" cy="295.3" rx="0.9" ry="1" stroke-width="1" fill="#555"/>
<ellipse cx="750.6" cy="309.3" rx="0.9" ry="1" stroke-width="1" fill="#555"/>
<ellipse cx="769.3" cy="319.8" rx="0.9" ry="1" stroke-width="1" fill="#555"/>
</g>
<path d="M723 300.5 Q723.2 297.5 726.5 297 L734.5 299.5 L745 309 Q746.3 310.5 746.3 312.5 L746.3 336 Q746 338 744 337 L725 325.5 Q723.6 324.5 723.6 322.5 Z" stroke-width="1.5" stroke="#333"/>
<ellipse cx="725.2" cy="299.5" rx="0.8" ry="0.9" stroke-width="0.9" fill="#666"/>
<ellipse cx="744.8" cy="311" rx="0.8" ry="0.9" stroke-width="0.9" fill="#666"/>
<ellipse cx="725.3" cy="323" rx="0.8" ry="0.9" stroke-width="0.9" fill="#666"/>
<ellipse cx="744.8" cy="335.3" rx="0.8" ry="0.9" stroke-width="0.9" fill="#666"/>
<path d="M769.5 274 L763.5 278" stroke="#222" stroke-width="2.4" stroke-linecap="butt"/>
<ellipse cx="770.2" cy="273.5" rx="2.6" ry="3" fill="#444" stroke-width="1"/>
<g>
<ellipse cx="780.3" cy="368" rx="6.3" ry="9" transform="rotate(-28 780.3 368)" stroke-width="1.3" fill="#fff"/>
<ellipse cx="779" cy="368.5" rx="5.2" ry="8" transform="rotate(-28 779 368.5)" stroke-width="1.6"/>
<ellipse cx="778" cy="369.3" rx="3.8" ry="6.3" transform="rotate(-28 778 369.3)" stroke-width="0.9"/>
</g>
<g>
<path d="M641 404 L646.4 384 L655.7 378 L665 380 L683.4 358.1 L694 356.1 L711 367.4 L715.8 368.7 L724.4 373.3 L732.3 378.6 L735 393 L743.5 413 L742.2 417.6 L724 428 L724.5 457.4 L731.7 464 L738.3 471.2 L736.8 479.2 L702.7 500.3 L695.4 500.3 L687.4 490.8 L666.3 480.7 L640.2 464.7 L639.4 458 Z" stroke-width="0.01" fill="#fff" stroke="#fff"/>
<path d="M626.6 377.3 L640.6 369.5" stroke-width="1.9" stroke="#333"/>
<path d="M645.6 366.8 L683.4 344.2" stroke-width="1.2" stroke="#3a3a3a"/>
<path d="M646.6 368.0 L684.0 345.5" stroke-width="0.6" stroke="#555"/>
<path d="M628.8 380.5 L642.8 372.7" stroke-width="1.9" stroke="#333"/>
<path d="M647.8 370.0 L685.0 346.7" stroke-width="1.2" stroke="#3a3a3a"/>
<path d="M648.8 371.2 L685.6 348.0" stroke-width="0.6" stroke="#555"/>
<path d="M631.0 383.7 L645.0 375.9" stroke-width="1.9" stroke="#333"/>
<path d="M650.0 373.2 L686.6 349.2" stroke-width="1.2" stroke="#3a3a3a"/>
<path d="M651.0 374.4 L687.2 350.5" stroke-width="0.6" stroke="#555"/>
<path d="M633.2 386.9 L647.2 379.1" stroke-width="1.9" stroke="#333"/>
<path d="M652.2 376.4 L688.2 351.7" stroke-width="1.2" stroke="#3a3a3a"/>
<path d="M653.2 377.6 L688.8 353.0" stroke-width="0.6" stroke="#555"/>
<path d="M635.4 390.1 L649.4 382.3" stroke-width="1.9" stroke="#333"/>
<path d="M654.4 379.6 L689.8 354.2" stroke-width="1.2" stroke="#3a3a3a"/>
<path d="M655.4 380.8 L690.4 355.5" stroke-width="0.6" stroke="#555"/>
<path d="M637.6 393.3 L651.6 385.5" stroke-width="1.9" stroke="#333"/>
<path d="M656.6 382.8 L664.6 378.3" stroke-width="1.2" stroke="#3a3a3a"/>
<path d="M639.8 396.5 L653.8 388.7" stroke-width="1.9" stroke="#333"/>
<path d="M658.8 386.0 L666.8 381.5" stroke-width="1.2" stroke="#3a3a3a"/>
<path d="M642.5 368 L648.2 376.5 L646.5 378 L640.5 369.5 Z" stroke-width="0.5" fill="#fff" stroke="#fff"/>
<path d="M650 372 L686 352 M652 376.5 L690 355" stroke-width="0.9"/>
<path d="M683.4 358.1 L694 356.1 Q702 358.5 711 367.4 L715.8 368.7 M686 352 L683.4 358.1 M660 371.5 L684 358 M667 375 L690 362.5 Q698 368 702.5 376.5" stroke-width="1"/>
<path d="M677.3 367 L677.5 372.5 Q679.5 374 681.7 372.5 L681.5 367" stroke-width="0.9" fill="#fff"/>
<ellipse cx="679.4" cy="367" rx="2.2" ry="1.2" stroke-width="0.9" fill="#fff"/>
<path d="M687.4 385.9 L715.8 368.7 L724.4 373.3 L732.3 378.6 L735 393.1 L743.5 413 L742.2 417.6 L715.1 432.5 L708 431 L689.4 398.4 Z" stroke-width="1.2" fill="#fff"/>
<ellipse cx="717.8" cy="402.4" rx="12.4" ry="13.8" transform="rotate(18 717.8 402.4)" stroke-width="1.7"/>
<ellipse cx="717.8" cy="402.4" rx="11" ry="12.4" transform="rotate(18 717.8 402.4)" stroke-width="0.6"/>
<ellipse cx="699.3" cy="385.9" rx="3.6" ry="2.9" transform="rotate(-28 699.3 385.9)" stroke-width="1"/>
<ellipse cx="711.1" cy="379.3" rx="4" ry="3.2" transform="rotate(-28 711.1 379.3)" stroke-width="1"/>
<path d="M718.4 376.3 L724 372.6 L728.5 378 L725.5 385 L719.5 383.5 Z M693 395 L703 390.5 L702 397 L696 400.5 Z" stroke-width="0.9"/>
<ellipse cx="692.5" cy="390" rx="1.2" ry="1.2" stroke-width="0.9"/>
<ellipse cx="727.7" cy="380.6" rx="1.2" ry="1.2" stroke-width="0.9"/>
<ellipse cx="735.6" cy="410.3" rx="1.2" ry="1.2" stroke-width="0.9"/>
<ellipse cx="714.5" cy="426.5" rx="1.2" ry="1.2" stroke-width="0.9"/>
<ellipse cx="707.8" cy="421.5" rx="1.2" ry="1.2" stroke-width="0.9"/>
<ellipse cx="692" cy="400.6" rx="1.2" ry="1.2" stroke-width="0.9"/>
<ellipse cx="705.5" cy="383" rx="1.2" ry="1.2" stroke-width="0.9"/>
<path d="M736.5 400.5 L742 397.3 Q745 398 744.5 401 L740 404.5" stroke-width="0.9"/>
<path d="M743.5 413 L744.6 419.5 L717 435.8 L709 434.3" stroke-width="1"/>
<path d="M686 386.8 L688 400 M684.5 388 L686.5 401" stroke-width="0.9"/>
<path d="M688.0 401.0 Q694.0 424.0 707.0 431.5 L716.0 431.5" stroke-width="1.5" stroke="#333"/>
<path d="M687.4 404.3 Q694.8 426.2 708.5 433.2 L717.8 432.1" stroke-width="1.5" stroke="#333"/>
<path d="M686.8 407.6 Q695.6 428.4 710.0 434.9 L719.6 432.7" stroke-width="1.5" stroke="#333"/>
<path d="M686.2 410.9 Q696.4 430.6 711.5 436.6 L721.4 433.3" stroke-width="1.5" stroke="#333"/>
<path d="M685.6 414.2 Q697.2 432.8 713.0 438.3 L723.2 433.9" stroke-width="1.5" stroke="#333"/>
<path d="M641.1 404 L646.4 384 Q649 378.5 655.7 377.9 Q662 377.5 666 381 L680.8 396 L686 404" stroke-width="1.3"/>
<path d="M643.5 405 L648.3 386 Q650.5 381 655.8 380.2 Q661 380 664.5 383 L678.8 397.5 L683.8 405" stroke-width="0.9"/>
<ellipse cx="647.2" cy="383.5" rx="1.3" ry="1.3" stroke-width="0.9" fill="#fff"/>
<ellipse cx="641.5" cy="401" rx="1.3" ry="1.3" stroke-width="0.9" fill="#fff"/>
<ellipse cx="672" cy="387" rx="1.3" ry="1.3" stroke-width="0.9" fill="#fff"/>
<ellipse cx="683" cy="401.5" rx="1.3" ry="1.3" stroke-width="0.9" fill="#fff"/>
<ellipse cx="659.5" cy="378.6" rx="1.3" ry="1.3" stroke-width="0.9" fill="#fff"/>
<path d="M655.7 387.5 Q657 383 660.5 382.5 M655.7 387.5 L658.5 405.5 M648.4 410.3 L674.2 397.1 M647.5 397 L649.5 411.5" stroke-width="0.9"/>
<path d="M641 404 L639.4 458.1 L640.2 464.7 L666.3 480.7 L687.4 490.8 L695.4 500.3 L702.7 500.3 L736.8 479.2 L738.3 471.2 L731.7 464 L724.5 457.4" stroke-width="1.2"/>
<path d="M644.5 405 L645.3 464 M640 421 L644.5 423 M640 441 L644.8 443" stroke-width="0.9"/>
<path d="M644.8 434.9 L678 416 M644.8 438 L678 419.2 M648.9 461.8 L685.2 443.6 M651.8 466.1 L688.1 448.7 M645.3 464 L666 477 L669.2 474.1 L689.6 464 M666.3 480.7 L664.9 478.5" stroke-width="0.9"/>
<ellipse cx="667.1" cy="456" rx="2.3" ry="3.3" transform="rotate(-25 667.1 456)" stroke-width="0.9"/>
<ellipse cx="641.8" cy="461.5" rx="1.3" ry="1.3" stroke-width="0.9" fill="#fff"/>
<ellipse cx="666.5" cy="478.8" rx="1.3" ry="1.3" stroke-width="0.9" fill="#fff"/>
<ellipse cx="688" cy="489.5" rx="1.3" ry="1.3" stroke-width="0.9" fill="#fff"/>
<ellipse cx="642" cy="408" rx="1.3" ry="1.3" stroke-width="0.9" fill="#fff"/>
<path d="M678 403 L680.9 436.3 L688.1 446.5 M689.6 424.7 L689.6 487.2 M694 430 L694 470 M686 404 L689.6 424.7 M689.6 446 L694 444 M689.6 452 L694 450 M683 410 L686 436" stroke-width="1"/>
<ellipse cx="691.8" cy="437" rx="1" ry="1" stroke-width="0.8"/>
<ellipse cx="691.8" cy="458" rx="1" ry="1" stroke-width="0.8"/>
<ellipse cx="708.5" cy="446.5" rx="7.6" ry="8.6" transform="rotate(20 708.5 446.5)" stroke-width="1.3" fill="#fff"/>
<ellipse cx="708.3" cy="446.3" rx="5.2" ry="6" transform="rotate(20 708.3 446.3)" stroke-width="1.6" stroke="#333"/>
<ellipse cx="708.2" cy="446.2" rx="2.6" ry="3.1" transform="rotate(20 708.2 446.2)" stroke-width="1.1"/>
<path d="M697 440 Q697.5 434.5 702 433.5 M697 440 L697.5 462 M700 452.5 L704 455" stroke-width="1"/>
<path d="M723.7 433.4 L724.3 457.4 M716.5 436.5 L727.5 431.5 Q729.5 432 729.3 434.5 L718.5 440 M716 452 L724 448 M714 455.5 L724.3 451 M718 458.5 L724.5 455" stroke-width="1"/>
<path d="M722 445 L724 446.5 L724 457 L716 461" stroke-width="2" stroke="#333"/>
<path d="M707 468.3 L724.5 464 L737.6 471.2 M703 474 L716 469.5 L729 478 M697.5 462 L701 470 L697 477 L695.4 482.8 L705.6 478.5 L717.2 484.3 M695.4 482.8 L695.4 500.3 M737.6 471.2 L736.8 479.2 M703 474 L703.5 479" stroke-width="1"/>
<ellipse cx="728.8" cy="472.7" rx="1.5" ry="1.5" stroke-width="0.9"/>
<ellipse cx="732.3" cy="470" rx="1.5" ry="1.5" stroke-width="0.9"/>
<ellipse cx="699.8" cy="488.7" rx="1.5" ry="1.5" stroke-width="0.9"/>
<ellipse cx="704.3" cy="485.8" rx="1.5" ry="1.5" stroke-width="0.9"/>
<ellipse cx="722" cy="474.5" rx="1.5" ry="1.5" stroke-width="0.9"/>
<path d="M708.5 477 L716.5 482 M706.5 480 L715 485.5" stroke-width="1.1"/>
<ellipse cx="717.2" cy="485.6" rx="2" ry="3" transform="rotate(-20 717.2 485.6)" stroke-width="1.2" fill="#fff"/>
</g>
<g transform="rotate(-28 608 407.3)"><rect x="605.4" y="405.5" width="5.2" height="3.6" rx="1.4" fill="#fff" stroke-width="0.9"/><ellipse cx="606.4" cy="407.3" rx="1" ry="1.7" stroke-width="0.7"/></g>
<g transform="rotate(-28 663.3 504.3)"><rect x="660.6999999999999" y="502.5" width="5.2" height="3.6" rx="1.4" fill="#fff" stroke-width="0.9"/><ellipse cx="661.6999999999999" cy="504.3" rx="1" ry="1.7" stroke-width="0.7"/></g>
<rect x="566" y="381.5" width="5" height="4" rx="1.2" fill="#333" stroke-width="0.8"/>
<g>
<path d="M582.6 432 L582.6 426.8 L585.5 416.9 Q587 412.5 591.5 412.5 Q598 412.5 604.4 416.9 Q611 421 616.3 428 Q621 436 624.2 448.6 L630.1 470.4 L633.4 474 L633.6 497 L631.5 501 L627.2 516 L626.5 524.5 Q626.8 528.5 623.5 529.3 Q620.5 529.5 619.5 527.5 L609.5 519" stroke-width="1.1"/>
<path d="M585 431 L585 427.5 L587.6 418 Q588.8 415 591.8 415 Q597.5 415 603.3 419 Q609.2 422.8 614.2 429.4 Q618.6 437 621.8 449.2 L627.7 471.4 L630.4 475 L630.5 496 L628.8 499.5 L624.8 515.5 L624 523 M619.5 524.5 L610.5 517" stroke-width="0.9"/>
<ellipse cx="585" cy="421" rx="1.1" ry="1.2" stroke-width="0.8"/>
<ellipse cx="597" cy="414" rx="1.1" ry="1.2" stroke-width="0.8"/>
<ellipse cx="611.5" cy="424" rx="1.1" ry="1.2" stroke-width="0.8"/>
<ellipse cx="621" cy="441.5" rx="1.1" ry="1.2" stroke-width="0.8"/>
<ellipse cx="627.5" cy="463" rx="1.1" ry="1.2" stroke-width="0.8"/>
<ellipse cx="632" cy="480" rx="1.1" ry="1.2" stroke-width="0.8"/>
<ellipse cx="632" cy="490" rx="1.1" ry="1.2" stroke-width="0.8"/>
<ellipse cx="630" cy="503" rx="1.1" ry="1.2" stroke-width="0.8"/>
<ellipse cx="623.5" cy="526" rx="1.1" ry="1.2" stroke-width="0.8"/>
</g>
<g>
<path d="M549.9 435.7 L567.7 426.8 Q574 425.5 580.6 428.8 Q589 435 594.5 446.6 Q601 458 605.4 470.4 L609.3 484.3 L610.3 518 L607.3 535.8 L594.5 545.7 L580.6 547.7 L551.8 528.9 L543.9 508.1 L542.9 476.4 L547.9 454.6 L542.9 447.6 L543.9 441.7 Z" stroke-width="1.2" fill="#fff"/>
<path d="M553 440 L568 431.5 Q574 430.5 579.5 433.5 Q586 439 591 449 Q597 460 601 472 M560 437 L568.5 434 Q578 433.5 584 442 Q589 449 592 458" stroke-width="0.9"/>
<path d="M548 441 L556 437 L558 441.5 L550 446 Z M556 437 L563 433.5 L566 437.5 L558 441.5 M563 433.5 L570 430.5 L573 434.5 L566 437.5" stroke-width="1.1"/>
<path d="M544 443 L548 441 L550 446 L545.5 448.5 M551 446 L560 441 M553 449 L566 442" stroke-width="1.3" stroke="#333"/>
<ellipse cx="569.5" cy="438.5" rx="1.8" ry="2.2" stroke-width="1.2"/>
<ellipse cx="566.5" cy="446.5" rx="2.2" ry="2.6" stroke-width="1.1"/>
<ellipse cx="552.5" cy="456.5" rx="1.8" ry="2.2" stroke-width="1.2"/>
<path d="M559.5 471.0 L559.5 446.0 Q560.7 444.4 561.9 446.0 L561.9 472.0" stroke-width="1"/>
<path d="M564.5 472.5 L564.5 448.8 Q565.7 447.1 566.9 448.8 L566.9 473.5" stroke-width="1"/>
<path d="M569.5 474.0 L569.5 451.5 Q570.7 449.9 571.9 451.5 L571.9 475.0" stroke-width="1"/>
<path d="M574.5 475.5 L574.5 454.2 Q575.7 452.6 576.9 454.2 L576.9 476.5" stroke-width="1"/>
<path d="M579.5 477.0 L579.5 457.0 Q580.7 455.4 581.9 457.0 L581.9 478.0" stroke-width="1"/>
<path d="M547.9 454.6 L550 470 L548 478 M551 450 L552.5 468 M584 452 L589 455 L590 470 M586 444 L592 452 L596 466 L588 472" stroke-width="1"/>
<ellipse cx="593.5" cy="454" rx="1.6" ry="2.4" stroke-width="1"/>
<path d="M551 478 L557 470.5 L575 471 L582 478 L583 499 L576 510 L560 511.5 L551.5 500 Z" stroke-width="1.1"/>
<ellipse cx="565.5" cy="492.2" rx="9.2" ry="11.4" transform="rotate(-12 565.5 492.2)" stroke-width="1.1"/>
<ellipse cx="566.5" cy="492.5" rx="6.6" ry="8.8" transform="rotate(-12 566.5 492.5)" stroke-width="1.8" stroke="#333"/>
<ellipse cx="567.5" cy="493" rx="4.6" ry="6.6" transform="rotate(-12 567.5 493)" stroke-width="1"/>
<path d="M551 478 L557 484 M557 470.5 L560.5 481 M575 471 L572 481.5 M582 478 L574.5 486 M583 499 L575 498 M576 510 L571 502.5 M560 511.5 L561.5 503 M551.5 500 L557 496.5" stroke-width="0.9"/>
<path d="M587.5 472.4 L604.4 466.4 L609.3 470.4 M587.5 472.4 L588 530 M591 475 L591.5 528 M588 530 L605.5 520.5 M591 475 L605 470" stroke-width="1"/>
<path d="M596 484 L599.5 482.5 L600.5 512 L597 513.5 Z M603.5 478 L603.8 487 M606.5 477 L606.8 486" stroke-width="1"/>
<path d="M597.5 486 L598.5 511" stroke-width="1.6" stroke="#555"/>
<ellipse cx="590" cy="471.5" rx="1.3" ry="1.3" stroke-width="0.9"/>
<path d="M597 515 L604 511.5 L606 518 L599 522 Z M594 520 L597 515" stroke-width="1"/>
<ellipse cx="601.5" cy="516.5" rx="1.2" ry="1.2" stroke-width="0.9"/>
<ellipse cx="599.5" cy="524.5" rx="1.2" ry="1.2" stroke-width="0.9"/>
<path d="M583 512 Q586 511 587.5 514 L590.5 527.5 Q590.5 531 587.5 531.5 Q584.5 531 584 528 L581.5 515.5 Q581.5 513 583 512 Z" stroke-width="1"/>
<ellipse cx="587.3" cy="528.3" rx="1.3" ry="1.3" stroke-width="0.9"/>
<path d="M550 507 L583 524 L584.5 546.5 L580.6 547.7 L551.8 528.9 Z" stroke-width="0.8" fill="#e2e2e2"/>
<path d="M552.0 509.0 L552.0 529.5" stroke-width="0.8" stroke="#666"/>
<path d="M554.6 510.4 L554.6 531.0" stroke-width="0.8" stroke="#666"/>
<path d="M557.2 511.7 L557.2 532.4" stroke-width="0.8" stroke="#666"/>
<path d="M559.8 513.0 L559.8 533.9" stroke-width="0.8" stroke="#666"/>
<path d="M562.4 514.4 L562.4 535.3" stroke-width="0.8" stroke="#666"/>
<path d="M565.0 515.8 L565.0 536.8" stroke-width="0.8" stroke="#666"/>
<path d="M567.6 517.1 L567.6 538.2" stroke-width="0.8" stroke="#666"/>
<path d="M570.2 518.5 L570.2 539.6" stroke-width="0.8" stroke="#666"/>
<path d="M572.8 519.8 L572.8 541.1" stroke-width="0.8" stroke="#666"/>
<path d="M575.4 521.1 L575.4 542.5" stroke-width="0.8" stroke="#666"/>
<path d="M578.0 522.5 L578.0 544.0" stroke-width="0.8" stroke="#666"/>
<path d="M580.6 523.9 L580.6 545.5" stroke-width="0.8" stroke="#666"/>
<path d="M583.2 525.2 L583.2 546.9" stroke-width="0.8" stroke="#666"/>
<ellipse cx="566.5" cy="518" rx="1.4" ry="2" stroke-width="1.1"/>
<ellipse cx="556" cy="521" rx="1" ry="1.5" stroke-width="1"/>
<ellipse cx="575.5" cy="537" rx="2.6" ry="3.2" stroke-width="1.3" fill="#fff"/>
<path d="M543.9 508.1 L541 503 L544 499.5 L548 501 M545 497 L549.5 495 L551 499" stroke-width="1"/>
<ellipse cx="549" cy="497.5" rx="1.5" ry="1.6" stroke-width="1.3" stroke="#333"/>
<path d="M588 532 L604.5 523 L607 527 L607.3 535.8 L594.5 545.7 L588.5 542.5 Z M590.5 535.5 L603 528.5 L603.5 535 L593 541.5 Z" stroke-width="1"/>
</g>
<path d="M507.7 443.0 L521.5 434.8" stroke="#222" stroke-width="3.6" stroke-linecap="butt"/>
<path d="M507.7 443.0 L515.1 438.6" stroke="#fff" stroke-width="1.7" stroke-linecap="butt"/>
<path d="M515.1 438.6 L521.5 434.8" stroke="#8a8a8a" stroke-width="2.2" stroke-dasharray="0.7 0.9" stroke-linecap="butt"/>
<circle cx="505.5" cy="444.3" r="3.2" fill="#9a9a9a" stroke-width="1.3"/>
<circle cx="505.5" cy="444.3" r="1.4" stroke-width="0.8"/>
<g>
<path d="M501.3 485.6 L511.5 482 Q516.5 483.5 517.2 490.5 Q517.4 496 514.6 499.3 L507.6 501.9 Z" stroke-width="1.1" fill="#fff"/>
<ellipse cx="504.4" cy="493.6" rx="4.7" ry="8.8" transform="rotate(-22 504.4 493.6)" stroke-width="1.7" fill="#fff"/>
<ellipse cx="505.2" cy="493.8" rx="3.3" ry="7.3" transform="rotate(-22 505.2 493.8)" stroke-width="0.8"/>
</g>
<ellipse cx="484.6" cy="505.4" rx="3.9" ry="7.2" transform="rotate(-25 484.6 505.4)" stroke-width="1.3"/>
<path d="M486.8 497.8 L489 499.5" stroke-width="1.6" stroke="#fff"/>
<g>
<ellipse cx="468.6" cy="514.7" rx="7.8" ry="10.6" transform="rotate(-25 468.6 514.7)" stroke-width="1.3" fill="#fff"/>
<ellipse cx="467.6" cy="515.2" rx="6.6" ry="9.5" transform="rotate(-25 467.6 515.2)" stroke-width="1"/>
<ellipse cx="468.6" cy="516" rx="4.4" ry="7.4" transform="rotate(-25 468.6 516)" stroke-width="1"/>
</g>
<g>
<path d="M750 512 Q754 516.5 760.8 507.6 Q764.5 503 766.6 501.8 L769 503 L769.4 506.5 L779.7 513.8 L779.7 516.6 L762.5 526.4 L752.8 520.5 L752.6 526.2 L750.2 525 Z" stroke-width="1.3" fill="#fff"/>
<path d="M753 516.8 L766 510 L777.1 514.6 L761.8 523 Z M766.6 501.8 L767 509.5 M764.5 512 L762.8 519.5 M750 512 L752.8 520.5 M762.5 526.4 L762.3 523" stroke-width="0.9"/>
<path d="M760.3 528.6 L764.8 529.3" stroke-width="1.4"/>
</g>
<g>
<path d="M777.5 501.5 L789 507.6" stroke="#3a3a3a" stroke-width="8" stroke-linecap="butt"/>
<path d="M777.5 501.5 L789 507.6" stroke="#aaa" stroke-width="6.4" stroke-dasharray="0.8 1.1" stroke-linecap="butt"/>
<ellipse cx="789.3" cy="507.8" rx="2.6" ry="3.9" transform="rotate(-28 789.3 507.8)" stroke-width="1.2" fill="#fff"/>
</g>
<path d="M776.5 536.6 L781 538.6" stroke="#222" stroke-width="2.6" stroke-linecap="butt"/>
<ellipse cx="781.8" cy="539" rx="2.6" ry="3.2" fill="#555" stroke-width="1.1"/>
<circle cx="714" cy="552.6" r="2.6" fill="#1a1a1a"/>
<path d="M646.5 562.5 L651.5 561 L660.5 568.8 L656 573.2 L649.5 570 Z" stroke-width="1.8" fill="#fff" stroke="#333"/>
<path d="M650 564.5 L656.5 569.5 L654.5 571 L649.8 567.5 Z" stroke-width="0.8"/>
<ellipse cx="648" cy="563" rx="0.9" ry="0.9" stroke-width="1" fill="#333"/>
<ellipse cx="659" cy="569.5" rx="0.9" ry="0.9" stroke-width="1" fill="#333"/>
<path d="M642.5 577 L647 579" stroke="#222" stroke-width="2.4" stroke-linecap="butt"/>
<ellipse cx="642.8" cy="577.3" rx="2.3" ry="2.8" fill="#fff" stroke-width="1.1"/>
<g class="ld">
<path d="M623.5 91.5 L623.5 113"/>
<path d="M581.7 112 L581.7 133"/>
<path d="M476.6 130.5 L476.6 152"/>
<path d="M531.6 184 L531.6 206"/>
<path d="M487.5 197.5 L487.5 218"/>
<path d="M441 200.5 L441 222"/>
<path d="M645.5 141 L645.5 163"/>
<path d="M689.5 105 L689.5 126"/>
<path d="M724.5 100.5 L724.5 122"/>
<path d="M788.5 108 L788.5 128"/>
<path d="M761.5 137 L761.5 158"/>
<path d="M611 166.5 L611 188"/>
<path d="M575 201 L575 222"/>
<path d="M521.8 228 L521.8 250"/>
<path d="M513.5 317 L513.5 340"/>
<path d="M534.5 328 L534.5 350"/>
<path d="M598.5 272.5 L598.5 296"/>
<path d="M632 285 L632 305"/>
<path d="M645.5 243 L645.5 263"/>
<path d="M770 249.5 L770 270"/>
<path d="M753.5 259 L753.5 281"/>
<path d="M727 275 L727 296"/>
<path d="M781 339 L781 359"/>
<path d="M568.5 346 L568.5 366"/>
<path d="M608 384 L608 404"/>
<path d="M568.5 387.5 L568.5 428"/>
<path d="M504.5 420 L504.5 440"/>
<path d="M771 429 L771 451"/>
<path d="M784.5 451 L784.5 468.5"/>
<path d="M784.5 481 L784.5 499"/>
<path d="M504.7 503 L504.7 524"/>
<path d="M504.7 534 L504.7 540.7"/>
<path d="M486.5 512 L486.5 534"/>
<path d="M469.5 525 L469.5 548"/>
<path d="M528.4 540.7 L528.4 562.5"/>
<path d="M551 527 L551 540.7"/>
<path d="M621.5 527 L621.5 549"/>
<path d="M664.5 508 L664.5 528"/>
<path d="M714 529 L714 549"/>
<path d="M751 525 L751 548"/>
<path d="M781.5 543 L781.5 563"/>
<path d="M463.5 265.5 L486 265.5"/>
<path d="M487 277.3 L509 277.3"/>
<path d="M475.5 290.5 L498 290.5"/>
<path d="M729 174 L749 174"/>
<path d="M723 190.5 L743.5 190.5"/>
<path d="M729 206.5 L751 206.5"/>
<path d="M544 383.5 L565 383.5"/>
<path d="M724 451 L784.5 451"/>
<path d="M504.7 540.7 L551 540.7"/>
<path d="M660 569.5 L682 569.5"/>
<path d="M648 579.5 L666 579.5"/>
<path d="M480.5 160 L497.5 170"/>
<path d="M568.5 147.8 L578.5 142.3"/>
<path d="M538.5 241 L546 243.5 L532 252.5"/>
<path d="M553 221.5 L574 233 L528.5 260.5"/>
<path d="M578 222 L594 214"/>
<path d="M594 233.2 L608 225.3"/>
<path d="M626.5 213.5 L646 202.5"/>
<path d="M659 222 L658 232 L652 236" stroke-dasharray="3 1.5"/>
<path d="M707 164.5 L716.3 180 L720.5 177.5"/>
<path d="M696.4 192.1 L705.7 208.7 L715.8 196.6"/>
<path d="M683.4 196.6 L699.6 222 L711.7 215.2"/>
<path d="M762 279 L756 283"/>
<path d="M748 286 L731 296"/>
<path d="M724 299 L703 311 L703 352 L697 355.5"/>
<path d="M733.5 352.5 L714 363"/>
<path d="M773 371 L754 382"/>
<path d="M770.3 400 L762 404 L751 386 L718 403"/>
<path d="M596 321 L648 350 L651 357"/>
<path d="M613 404 L640 390"/>
<path d="M631 411.5 L648 402.5"/>
<path d="M747.8 438.5 L744 435.5 L731 442"/>
<path d="M724 455 L743 466.5 L744 481.5 L775 498.5"/>
<path d="M727 480 L735 484.5 L735 512 L745.5 518"/>
<path d="M668 501.5 L688 490.5"/>
<path d="M523 434 L534.5 428 L534.5 458 L547 452"/>
<path d="M517 487 L531.5 479 L531.5 511 L545 503"/>
<path d="M699.5 545.5 L711 551.5"/>
<path d="M671 557 L659 563"/>
<path d="M776 536.5 L762 528.5"/>
<path d="M653 573 L647 576.5"/>
<path d="M446 228 L450.5 230" stroke-dasharray="1.5 1"/>
<path d="M515 298 L523 302"/>
</g>
<!--/DIAGRAM-->
</svg>
<div id="rows">
<div class="row odd" style="top:631.25px"><svg class="ni" width="16" height="17"><use href="#note"/></svg><span style="left:135px">13045</span><span style="left:228px">13045-7001</span><span style="left:400px">RECEIVER-OIL</span><span style="left:571px">1</span></div>
<div class="row" style="top:649.4px"><svg class="ni" width="16" height="17"><use href="#note"/></svg><span style="left:135px">14091</span><span style="left:228px">14091-7004</span><span style="left:400px">COVER</span><span style="left:571px">1</span></div>
<div class="row odd" style="top:667.55px"><svg class="ni" width="16" height="17"><use href="#note"/></svg><span style="left:135px">32153</span><span style="left:228px">32153-7003</span><span style="left:400px">PIPE</span><span style="left:571px">1</span></div>
<div class="row sel" style="top:685.7px"><svg class="ni" width="16" height="17"><use href="#note"/></svg><span style="left:135px">32154</span><span style="left:228px">32154-7021</span><span style="left:400px">PIPE</span><span style="left:571px">1</span></div>
<div class="row odd" style="top:703.85px"><svg class="bk" width="16" height="15"><use href="#back"/></svg><svg class="ni" width="16" height="17"><use href="#note"/></svg><span style="left:135px">49015A</span><span style="left:228px">49015-7086</span><span style="left:400px">COVER-CRANKCASE</span><span style="left:571px">1</span></div>
<div class="row" style="top:722px"><svg class="bk" width="16" height="15"><use href="#back"/></svg><svg class="ni" width="16" height="17"><use href="#note"/></svg><span style="left:135px">49120</span><span style="left:228px">49120-7084</span><span style="left:400px">CRANKCASE-COMP</span><span style="left:571px">1</span></div>
<div class="row odd" style="top:740.15px"><svg class="ni" width="16" height="17"><use href="#note"/></svg><span style="left:135px">59071</span><span style="left:228px">59071-2079</span><span style="left:400px">JOINT</span><span style="left:571px">1</span></div>
</div>
<div id="thead">
<svg width="8" height="11" style="left:78px;top:10px"><use href="#sort"/></svg>
<svg width="8" height="11" style="left:164px;top:10px"><use href="#sort"/></svg>
<svg width="8" height="11" style="left:264px;top:10px"><use href="#sort"/></svg>
<svg width="8" height="11" style="left:506px;top:10px"><use href="#sort"/></svg>
<svg width="8" height="11" style="left:606px;top:10px"><use href="#sort"/></svg>
<svg width="12" height="12" style="left:357px;top:8px"><use href="#chk"/></svg>
<svg width="12" height="12" style="left:548px;top:8px"><use href="#chk"/></svg>
<svg width="12" height="12" style="left:786px;top:8px"><use href="#chk"/></svg>
<span style="left:115px">Ref #</span><span style="left:206px">Part #</span><span style="left:372px">Description</span><span style="left:563px">Qty</span><span style="left:801px">Context Note</span>
</div>
</body></html>
